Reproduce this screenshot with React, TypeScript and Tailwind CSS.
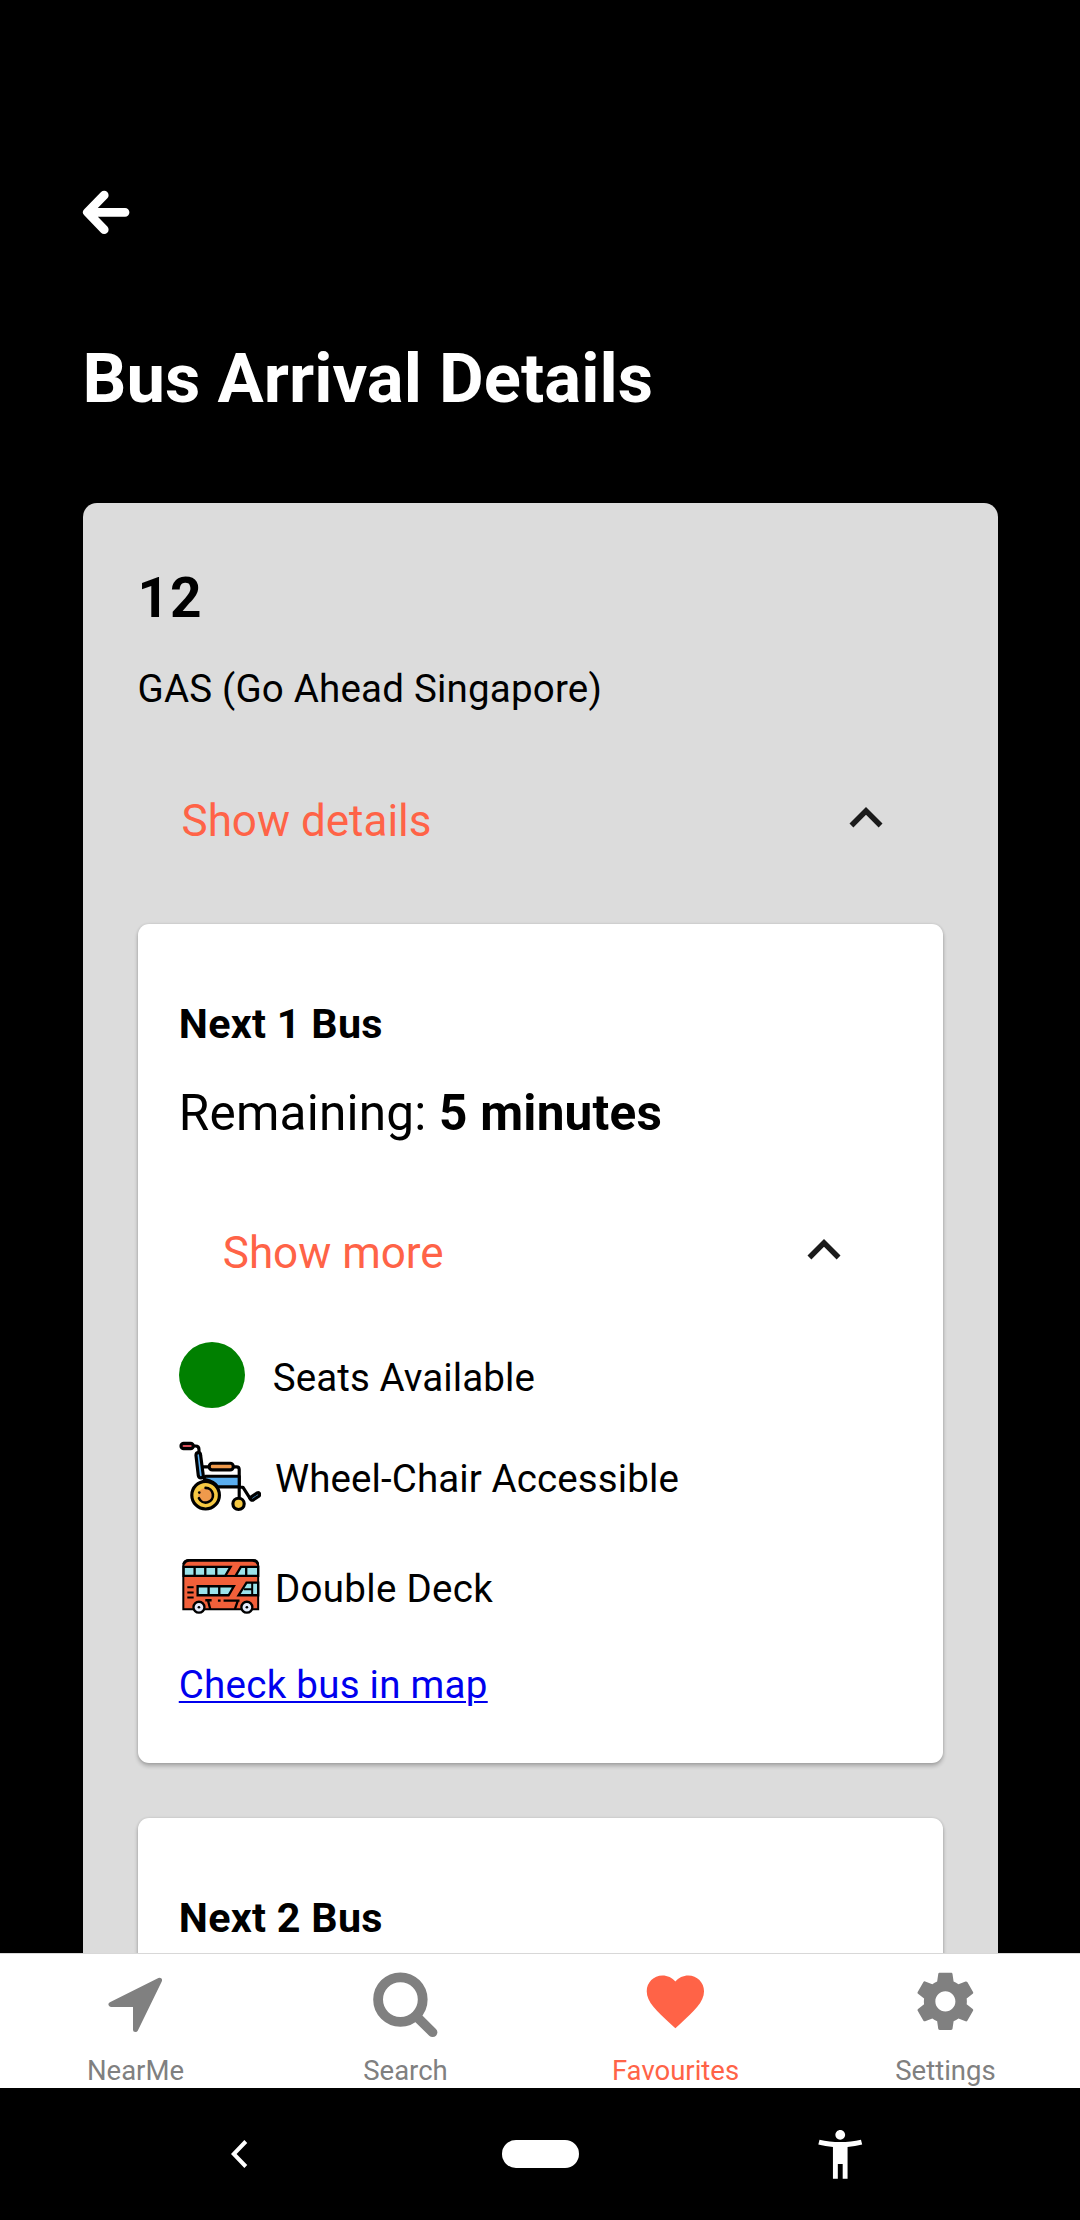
import type { ReactNode } from "react";

function BackArrow() {
  return (
    <svg className="overflow-visible" width="48" height="45" viewBox="0 0 48 45" fill="none" stroke="#fff" strokeWidth="8.8" strokeLinecap="round" strokeLinejoin="round">
      <path d="M21.2 5.2 L4.4 22.3 L21.2 39.6 M5.4 22.3 H42" />
    </svg>
  );
}

function ChevronUp() {
  return (
    <svg className="size-[66px] shrink-0" viewBox="0 0 24 24" fill="#1b1b1b">
      <path d="M12 8l-6 6 1.41 1.41L12 10.83l4.59 4.58L18 14z" />
    </svg>
  );
}

function Wheelchair() {
  return (
    <svg className="size-[82.5px] shrink-0" viewBox="26 15 248 248" stroke="#000" strokeWidth="9.5" strokeLinecap="round" strokeLinejoin="round">
      <path d="M68 48 H76 Q86 48 86 58 V70 M97 111 H116 M188 111 H199 Q207 111 207 119 V202 M207 172 H218 L240 206" fill="none" />
      <rect x="32" y="40" width="37" height="16" rx="8" fill="#d8505a" />
      <path d="M77 76 Q77 68 84 68 Q91 68 91 76 L99 137 Q99 144 92 144 Q85 144 84 137 Z" fill="#5aaef0" />
      <rect x="117" y="100" width="72" height="20" rx="9" fill="#ef9a4c" />
      <path d="M106 139 H207 V171 H142 Q132 154 104 149 Q98 144 106 139 Z" fill="#5aaef0" />
      <circle cx="106" cy="196" r="41.5" fill="#f5c842" />
      <circle cx="106" cy="196" r="22" fill="#ef9a4c" stroke="none" />
      <path d="M106 174 A22 22 0 1 1 86 205" fill="none" strokeWidth="8" />
      <circle cx="87" cy="188" r="4" fill="#000" stroke="none" />
      <circle cx="205" cy="222" r="17" fill="#f5c842" />
      <path d="M239 204 L261 189 Q266 187 268 191 Q270 196 266 199 L248 211 Q242 212 239 204 Z" fill="#5aaef0" />
    </svg>
  );
}

function DoubleDeckBus() {
  return (
    <svg className="size-[82.5px] shrink-0" viewBox="26 0 248 248" stroke="#000" strokeWidth="7">
      <path d="M39 193 V62 Q39 45 56 45 H247 Q264 45 264 62 V193 Z" fill="#f2603a" strokeWidth="6" />
      <path d="M40 58 Q44 46 58 46 H246 Q260 46 263 58" fill="none" strokeWidth="8" />
      <path d="M40 66 H181 L165 93 H40 Z" fill="#9be3ea" />
      <path d="M73 66 V93 M105 66 V93 M138 66 V93" fill="none" />
      <path d="M212 66 H264 V93 H196 Z" fill="#9be3ea" />
      <path d="M228 66 V93" fill="none" />
      <path d="M164 93 H200" fill="none" strokeWidth="6" />
      <path d="M82 124 H191 L175 151 H82 Z" fill="#9be3ea" />
      <path d="M115 124 V151 M147 124 V151" fill="none" />
      <path d="M264 113 H229 L205 151 H264 Z" fill="#9be3ea" />
      <path d="M246 113 V151 M221 133 H246" fill="none" strokeWidth="6" />
      <path d="M51 127 H70 M51 143 H70 M51 158 H70" fill="none" strokeWidth="6" />
      <path d="M105 166 H124 M113 166 L120 193 M143 167 H151 M160 167 H208 M203 167 L194 193" fill="none" strokeWidth="7" />
      <circle cx="86" cy="187" r="16.5" fill="#e6ebfa" />
      <circle cx="230" cy="187" r="16.5" fill="#e6ebfa" />
      <circle cx="86" cy="187" r="4" fill="#000" stroke="none" />
      <circle cx="230" cy="187" r="4" fill="#000" stroke="none" />
    </svg>
  );
}

function NavigateIcon() {
  return (
    <svg className="size-[68.75px]" viewBox="0 0 68.75 68.75" fill="currentColor" stroke="currentColor" strokeWidth="5" strokeLinejoin="round">
      <path d="M58.5 13.3 L10 37.4 H34.5 V62.6 Z" />
    </svg>
  );
}

function SearchIcon() {
  return (
    <svg className="size-[68.75px] overflow-visible" viewBox="0 0 68.75 68.75" fill="none" stroke="currentColor" strokeLinecap="round">
      <circle cx="29.4" cy="32.6" r="22.3" strokeWidth="9.8" />
      <path d="M45 49 L61.6 65.3" strokeWidth="9.6" />
    </svg>
  );
}

function HeartIcon() {
  return (
    <svg className="size-[68.75px]" viewBox="0 0 24 24" fill="currentColor">
      <path d="M12 21.35l-1.45-1.32C5.4 15.36 2 12.28 2 8.5 2 5.42 4.42 3 7.5 3c1.74 0 3.41.81 4.5 2.09C13.09 3.81 14.76 3 16.5 3 19.58 3 22 5.42 22 8.5c0 3.78-3.4 6.86-8.55 11.54L12 21.35z" />
    </svg>
  );
}

function GearIcon() {
  return (
    <svg className="size-[68.75px]" viewBox="0 0 24 24" fill="currentColor">
      <path d="M19.43 12.98c.04-.32.07-.64.07-.98s-.03-.66-.07-.98l2.11-1.65c.19-.15.24-.42.12-.64l-2-3.46c-.12-.22-.39-.3-.61-.22l-2.49 1c-.52-.4-1.08-.73-1.69-.98l-.38-2.65C14.46 2.18 14.25 2 14 2h-4c-.25 0-.46.18-.49.42l-.38 2.65c-.61.25-1.17.59-1.69.98l-2.49-1c-.23-.09-.49 0-.61.22l-2 3.46c-.13.22-.07.49.12.64l2.11 1.65c-.04.32-.07.65-.07.98s.03.66.07.98l-2.11 1.65c-.19.15-.24.42-.12.64l2 3.46c.12.22.39.3.61.22l2.49-1c.52.4 1.08.73 1.69.98l.38 2.65c.03.24.24.42.49.42h4c.25 0 .46-.18.49-.42l.38-2.65c.61-.25 1.17-.59 1.69-.98l2.49 1c.23.09.49 0 .61-.22l2-3.46c.12-.22.07-.49-.12-.64l-2.11-1.65zM12 15.5c-1.93 0-3.5-1.57-3.5-3.5s1.57-3.5 3.5-3.5 3.5 1.57 3.5 3.5-1.57 3.5-3.5 3.5z" />
    </svg>
  );
}

function Toggle({ label, className }: { label: string; className: string }) {
  return (
    <button className={`flex w-full items-start justify-between px-[44px] text-[44px] leading-[72px] text-[#ff6347] ${className}`}>
      <span>{label}</span>
      <ChevronUp />
    </button>
  );
}

function BusCard({ title, children }: { title: string; children?: ReactNode }) {
  return (
    <section className="rounded-[11px] bg-white px-[41.25px] pt-[76px] pb-[55px] shadow-[0_3px_4px_rgba(0,0,0,0.24),0_0_3px_rgba(0,0,0,0.12)]">
      <h3 className="text-[41.25px] leading-[48px] font-bold tracking-[0.3px]">{title}</h3>
      {children}
    </section>
  );
}

function Tab({ icon, label, active }: { icon: ReactNode; label: string; active?: boolean }) {
  return (
    <a className={`flex flex-1 flex-col items-center pt-[13px] ${active ? "text-[#ff6347]" : "text-[#808080]"}`}>
      {icon}
      <span className="mt-[19px] pl-px text-[27.5px] leading-[32px]">{label}</span>
    </a>
  );
}

export default function App() {
  return (
    <div className="flex h-[2220px] w-[1080px] flex-col overflow-hidden bg-black font-['Roboto',sans-serif] text-black">
      <main className="h-[1953px] shrink-0 overflow-hidden px-[82.5px] pt-[190px]">
        <BackArrow />
        <h1 className="mt-[103.5px] text-[68.75px] leading-[80px] font-bold tracking-[0.06px] text-white">Bus Arrival Details</h1>
        <div className="mt-[84.5px] rounded-[14px] bg-[#dcdcdc] px-[55px] pt-[63px] pb-[55px]">
          <h2 className="text-[55px] leading-[64px] font-bold tracking-[1px]">12</h2>
          <p className="mt-[35.5px] text-[38.5px] leading-[46px] tracking-[0.2px]">GAS (Go Ahead Singapore)</p>
          <Toggle label="Show details" className="mt-[73.5px]" />
          <div className="mt-[67px] flex flex-col gap-[55px]">
            <BusCard title="Next 1 Bus">
              <p className="mt-[36px] text-[49.5px] leading-[58px] tracking-[0.22px]">
                Remaining: <b className="font-bold">5 minutes</b>
              </p>
              <Toggle label="Show more" className="mt-[75px]" />
              <ul className="mt-[53px] text-[38.5px] leading-[46px]">
                <li className="flex items-start gap-[28px]">
                  <span className="size-[66px] rounded-full bg-[#008000]" />
                  <span className="mt-[13px] tracking-[0.1px]">Seats Available</span>
                </li>
                <li className="mt-[27px] flex items-start gap-[13.75px]">
                  <Wheelchair />
                  <span className="mt-[21px] tracking-[0.1px]">Wheel-Chair Accessible</span>
                </li>
                <li className="mt-[27.5px] flex items-start gap-[13.75px]">
                  <DoubleDeckBus />
                  <span className="mt-[21px] tracking-[0.3px]">Double Deck</span>
                </li>
              </ul>
              <a className="mt-[34.5px] block text-[38.5px] leading-[46px] tracking-[0.27px] text-[#0000ee] underline decoration-[2px] underline-offset-[3px]">
                Check bus in map
              </a>
            </BusCard>
            <BusCard title="Next 2 Bus" />
          </div>
        </div>
      </main>
      <nav className="flex h-[135px] shrink-0 overflow-hidden border-t border-[#d8d8d8] bg-white">
        <Tab icon={<NavigateIcon />} label="NearMe" />
        <Tab icon={<SearchIcon />} label="Search" />
        <Tab icon={<HeartIcon />} label="Favourites" active />
        <Tab icon={<GearIcon />} label="Settings" />
      </nav>
      <footer className="grid flex-1 grid-cols-[480px_120px_480px] items-center justify-items-center bg-black">
        <svg className="h-[28px] w-[18px]" viewBox="0 0 18 28" fill="none" stroke="#fff" strokeWidth="4">
          <path d="M14.8 1.5 L2.7 14 L14.8 26.5" />
        </svg>
        <span className="h-[28px] w-[77px] rounded-full bg-white" />
        <svg className="size-[58.5px]" viewBox="0 0 24 24" fill="#fff">
          <path d="M20.5 6c-2.61.7-5.67 1-8.5 1s-5.89-.3-8.5-1L3 8c1.86.5 4 .83 6 1v13h2v-6h2v6h2V9c2-.17 4.14-.5 6-1l-.5-2zM12 6c1.1 0 2-.9 2-2s-.9-2-2-2-2 .9-2 2 .9 2 2 2z" />
        </svg>
      </footer>
    </div>
  );
}
